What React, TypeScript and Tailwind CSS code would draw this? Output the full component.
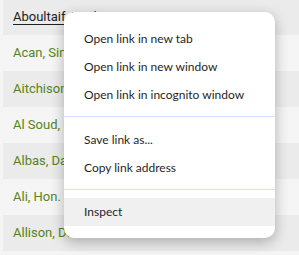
const rows = [
  { name: "Aboultaif, Ziad", active: true },
  { name: "Acan, Sima" },
  { name: "Aitchison, Scott" },
  { name: "Al Soud, Mohammad" },
  { name: "Albas, Dan" },
  { name: "Ali, Hon. Shafqat" },
  { name: "Allison, Dean" },
];

function Item({ label, active }: { label: string; active?: boolean }) {
  return (
    <div
      className={
        "h-7 flex items-center pl-5 text-[12px] text-[#1f1f1f] font-['Lato',sans-serif] whitespace-nowrap " +
        (active ? "bg-[#f0f0f0]" : "")
      }
    >
      {label}
    </div>
  );
}

function Sep({ bottom }: { bottom: string }) {
  return (
    <div className={"pt-[7px] " + bottom}>
      <div className="h-px bg-[#d3e3fd]" />
    </div>
  );
}

export default function App() {
  return (
    <div className="relative w-[299px] h-[255px] overflow-hidden bg-[#f5f5f5]">
      <div className="pl-[3px] -mt-px flex flex-col">
        {rows.map((r, i) => (
          <div
            key={r.name}
            className={
              "h-9 flex items-center pl-[10px] font-['Roboto',sans-serif] text-[13px] whitespace-nowrap " +
              (i % 2 === 0 ? "bg-[#ebebeb]" : "bg-[#f5f5f5]")
            }
          >
            {r.active ? (
              <span className="text-[#202124] underline underline-offset-[3px]">{r.name}</span>
            ) : (
              <span className="text-[#538520]">{r.name}</span>
            )}
          </div>
        ))}
      </div>
      <div className="absolute left-[64px] top-[12px] w-[211px] bg-white rounded-[10px] shadow-[0_4px_14px_rgba(0,0,0,0.28)] pt-[13px] pb-[12px]">
        <Item label="Open link in new tab" />
        <Item label="Open link in new window" />
        <Item label="Open link in incognito window" />
        <Sep bottom="pb-[9px]" />
        <Item label="Save link as..." />
        <Item label="Copy link address" />
        <Sep bottom="pb-[8px]" />
        <Item label="Inspect" active />
      </div>
    </div>
  );
}
